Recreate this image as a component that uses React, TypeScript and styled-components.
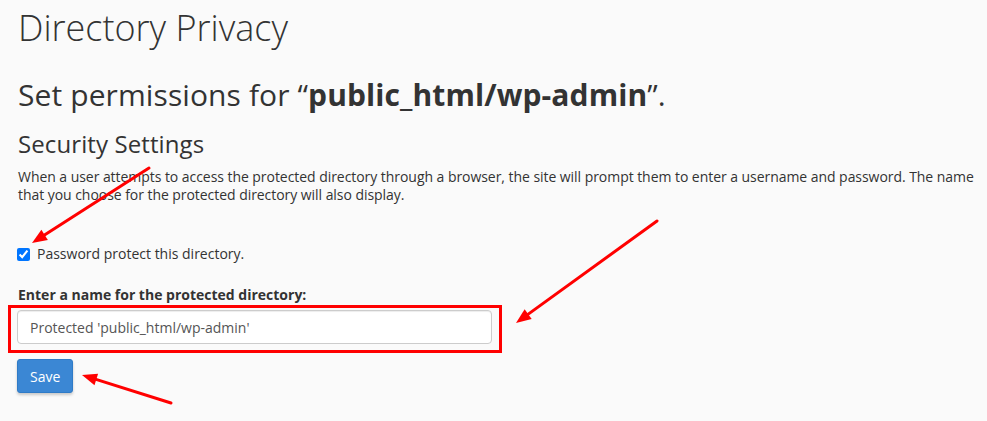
import React from 'react'
import styled, { createGlobalStyle } from 'styled-components'

const GlobalStyle = createGlobalStyle`
  html, body {
    margin: 0;
    padding: 0;
    background: #fafafa;
  }
  body {
    font-family: "Open Sans", "Liberation Sans", sans-serif;
    color: #333;
    font-size: 14px;
  }
`

type Pt = [number, number]

const Arrow = ({ from, to }: { from: Pt; to: Pt }) => {
  const dx = to[0] - from[0]
  const dy = to[1] - from[1]
  const len = Math.sqrt(dx * dx + dy * dy)
  const ux = dx / len
  const uy = dy / len
  const head = 15
  const half = 6
  const bx = to[0] - ux * head
  const by = to[1] - uy * head
  const p1 = `${bx - uy * half},${by + ux * half}`
  const p2 = `${bx + uy * half},${by - ux * half}`
  return (
    <g>
      <line x1={from[0]} y1={from[1]} x2={bx + ux * 2} y2={by + uy * 2} stroke="#ff0000" strokeWidth={3} strokeLinecap="round" />
      <polygon points={`${to[0]},${to[1]} ${p1} ${p2}`} fill="#ff0000" />
    </g>
  )
}

export default function App() {
  return (
    <Page>
      <GlobalStyle />
      <Content>
        <Title>Directory Privacy</Title>
        <Subtitle>
          Set permissions for “<b>public_html/wp-admin</b>”.
        </Subtitle>
        <SectionTitle>Security Settings</SectionTitle>
        <Description>
          When a user attempts to access the protected directory through a browser, the site will prompt them to enter a
          username and password. The name that you choose for the protected directory will also display.
        </Description>
        <CheckRow>
          <Check type="checkbox" defaultChecked />
          Password protect this directory.
        </CheckRow>
        <FieldLabel htmlFor="dirname">Enter a name for the protected directory:</FieldLabel>
        <NameInput id="dirname" defaultValue="Protected 'public_html/wp-admin'" />
        <SaveBtn>Save</SaveBtn>
      </Content>
      <Annotations width="987" height="421" viewBox="0 0 987 421">
        <rect x={9.5} y={306.5} width={491} height={45} fill="none" stroke="#ff0000" strokeWidth={3} />
        <Arrow from={[149, 168]} to={[32, 243]} />
        <Arrow from={[657, 221]} to={[516, 323]} />
        <Arrow from={[171, 403]} to={[82, 375]} />
      </Annotations>
    </Page>
  )
}

const Page = styled.div`
  position: relative;
  width: 987px;
  height: 421px;
  overflow: hidden;
`

const Content = styled.div`
  padding: 8px 0 0 18px;
  display: flex;
  flex-direction: column;
  align-items: flex-start;
`

const Title = styled.h1`
  margin: 0;
  font-size: 36px;
  font-weight: 300;
  line-height: 40px;
`

const Subtitle = styled.h2`
  margin: 30px 0 0;
  font-size: 30px;
  font-weight: 400;
  line-height: 33px;
  letter-spacing: 0.1px;
  b {
    font-weight: 700;
  }
`

const SectionTitle = styled.h3`
  margin: 19px 0 0;
  font-size: 24px;
  font-weight: 400;
  line-height: 27px;
  letter-spacing: 0.1px;
`

const Description = styled.p`
  margin: 11px 0 0;
  font-size: 14px;
  line-height: 18px;
  letter-spacing: -0.05px;
  color: #333;
`

const CheckRow = styled.label`
  margin: 40px 0 0 -1px;
  display: flex;
  align-items: center;
  gap: 7px;
  font-size: 14px;
  line-height: 20px;
`

const Check = styled.input`
  margin: 0;
  width: 13px;
  height: 13px;
`

const FieldLabel = styled.label`
  margin-top: 21px;
  font-weight: 700;
  font-size: 14px;
  line-height: 20px;
`

const NameInput = styled.input`
  margin: 5px 0 0 -1px;
  box-sizing: border-box;
  width: 475px;
  height: 34px;
  padding: 6px 12px;
  border: 1px solid #ccc;
  border-radius: 4px;
  background: #fff;
  font-family: "Open Sans", "Liberation Sans", sans-serif;
  font-size: 14px;
  color: #555;
  box-shadow: inset 0 1px 1px rgba(0, 0, 0, 0.075);
  :focus {
    outline: none;
  }
`

const SaveBtn = styled.button`
  margin: 15px 0 0 -1px;
  box-sizing: border-box;
  width: 56px;
  height: 34px;
  padding: 6px 12px;
  border: 1px solid #2f7bc7;
  border-radius: 3px;
  background: #3b87d4;
  color: #fff;
  font-family: "Open Sans", "Liberation Sans", sans-serif;
  font-size: 14px;
  box-shadow: 0 2px 3px rgba(0, 0, 0, 0.2);
  cursor: pointer;
`

const Annotations = styled.svg`
  position: absolute;
  top: 0;
  left: 0;
  pointer-events: none;
`
